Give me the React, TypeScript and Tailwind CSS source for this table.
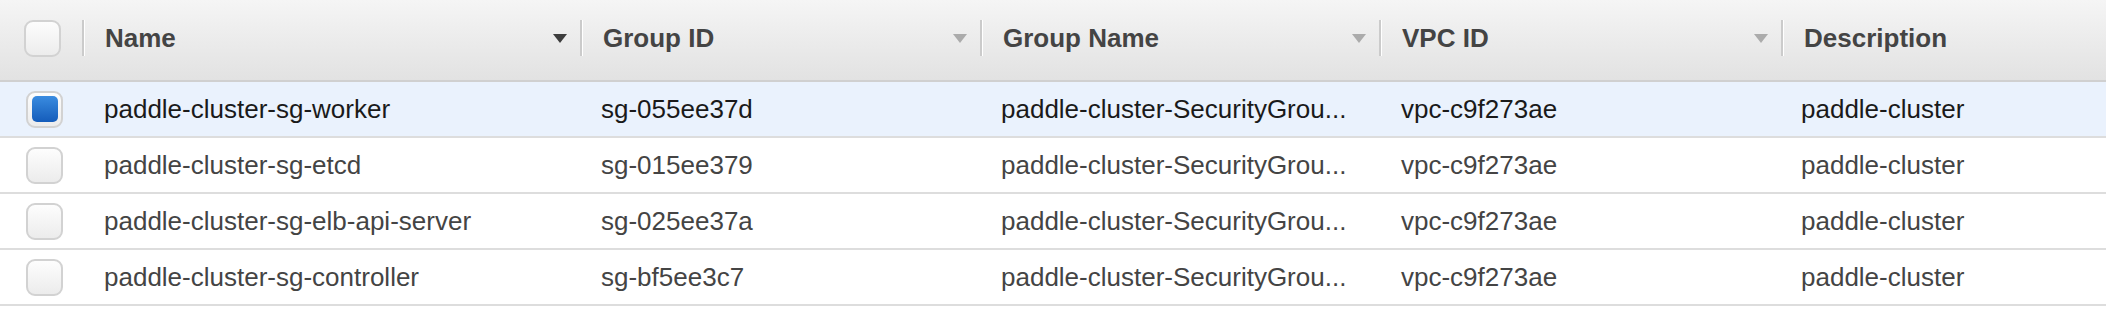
import React from "react";

type Group = {
  name: string;
  groupId: string;
  groupName: string;
  vpcId: string;
  description: string;
};

const groups: Group[] = [
  {
    name: "paddle-cluster-sg-worker",
    groupId: "sg-055ee37d",
    groupName: "paddle-cluster-SecurityGrou...",
    vpcId: "vpc-c9f273ae",
    description: "paddle-cluster",
  },
  {
    name: "paddle-cluster-sg-etcd",
    groupId: "sg-015ee379",
    groupName: "paddle-cluster-SecurityGrou...",
    vpcId: "vpc-c9f273ae",
    description: "paddle-cluster",
  },
  {
    name: "paddle-cluster-sg-elb-api-server",
    groupId: "sg-025ee37a",
    groupName: "paddle-cluster-SecurityGrou...",
    vpcId: "vpc-c9f273ae",
    description: "paddle-cluster",
  },
  {
    name: "paddle-cluster-sg-controller",
    groupId: "sg-bf5ee3c7",
    groupName: "paddle-cluster-SecurityGrou...",
    vpcId: "vpc-c9f273ae",
    description: "paddle-cluster",
  },
];

const gridCols = "grid grid-cols-[82px_498px_400px_399px_402px_1fr]";

const Checkbox: React.FC<{ checked?: boolean }> = ({ checked }) => (
  <div className="w-[37px] h-[37px] rounded-[9px] border-2 border-[#d2d2d2] bg-gradient-to-b from-[#fdfdfd] to-[#ececec] flex items-center justify-center">
    {checked && (
      <div className="w-[26px] h-[26px] rounded-[5px] bg-gradient-to-b from-[#3a8ce0] to-[#145cba]" />
    )}
  </div>
);

const SortArrow: React.FC<{ active?: boolean }> = ({ active }) => (
  <svg width="14" height="9" viewBox="0 0 14 9" className="shrink-0">
    <polygon points="0,0 14,0 7,9" fill={active ? "#3d3d3d" : "#ababab"} />
  </svg>
);

const Divider = () => (
  <span className="w-[2px] h-[36px] bg-[#cbcbcb] shadow-[1px_0_0_#ffffff] shrink-0" />
);

const HeaderCell: React.FC<{ label: string; sortable?: boolean; active?: boolean }> = ({
  label,
  sortable,
  active,
}) => (
  <div className="flex items-center h-full">
    <Divider />
    <span className="ml-[21px] flex-1 font-bold text-[#444444]">{label}</span>
    {sortable && <SortArrow active={active} />}
    {sortable && <span className="w-[13px] shrink-0" />}
  </div>
);

export default function App() {
  return (
    <div
      className="w-[2106px] h-[312px] bg-white overflow-hidden text-[26px] leading-[30px]"
      style={{ fontFamily: '"Liberation Sans", Arial, Helvetica, sans-serif' }}
    >
      {/* table header */}
      <div
        className={`${gridCols} h-[82px] pb-[4px] border-b-2 border-[#d0d0d0] bg-gradient-to-b from-[#f5f5f5] to-[#e2e2e2]`}
      >
        <div className="flex items-center pl-[24px]">
          <Checkbox />
        </div>
        <HeaderCell label="Name" sortable active />
        <HeaderCell label="Group ID" sortable />
        <HeaderCell label="Group Name" sortable />
        <HeaderCell label="VPC ID" sortable />
        <HeaderCell label="Description" />
      </div>

      {/* rows */}
      {groups.map((g, i) => {
        const selected = i === 0;
        return (
          <div
            key={g.groupId}
            className={`${gridCols} h-[56px] border-b-2 border-[#dddddd] ${
              selected ? "bg-[#eaf2fd] text-[#1a1a1a]" : "bg-white text-[#444444]"
            }`}
          >
            <div className="flex items-center pl-[26px]">
              <Checkbox checked={selected} />
            </div>
            <div className="flex items-center pl-[22px] whitespace-nowrap overflow-hidden">
              {g.name}
            </div>
            <div className="flex items-center pl-[21px] whitespace-nowrap overflow-hidden">
              {g.groupId}
            </div>
            <div className="flex items-center pl-[21px] whitespace-nowrap overflow-hidden">
              {g.groupName}
            </div>
            <div className="flex items-center pl-[22px] whitespace-nowrap overflow-hidden">
              {g.vpcId}
            </div>
            <div className="flex items-center pl-[20px] whitespace-nowrap overflow-hidden">
              {g.description}
            </div>
          </div>
        );
      })}
    </div>
  );
}
